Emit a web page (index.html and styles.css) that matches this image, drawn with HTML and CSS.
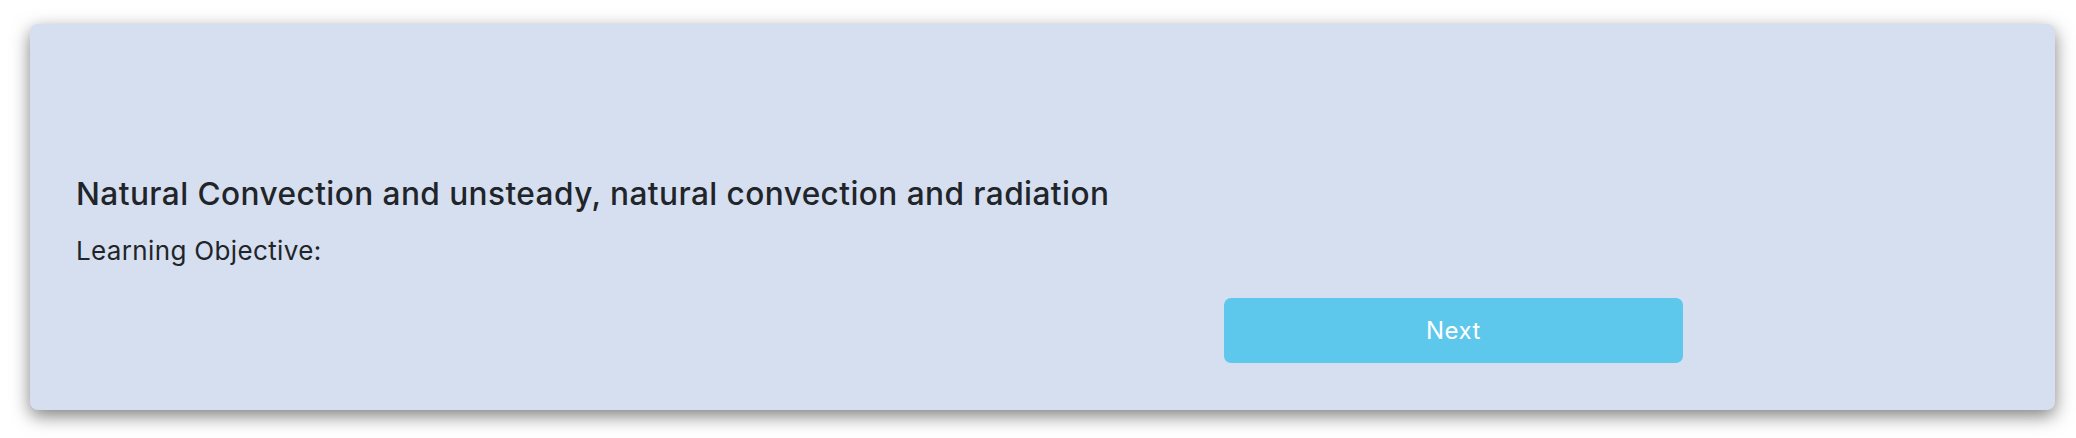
FILE: index.html
```html
<!DOCTYPE html>
<html lang="en">
<head>
<meta charset="utf-8">
<title>Natural Convection</title>
<link rel="stylesheet" href="styles.css">
</head>
<body>
<div class="page">
  <div class="card">
    <h4 class="card-title">Natural Convection and unsteady, natural convection and radiation</h4>
    <p class="card-text">Learning Objective:</p>
    <div class="actions">
      <button class="btn-next" type="button">Next</button>
    </div>
  </div>
</div>
</body>
</html>
```
FILE: styles.css
```css
html, body {
  margin: 0;
  padding: 0;
  background: #ffffff;
}
body {
  font-family: Inter, "Noto Sans", "Liberation Sans", sans-serif;
  color: #212529;
}
.page {
  padding: 24px 21px 28px 30px;
}
.card {
  background: #d6dff0;
  border-radius: 8px;
  box-shadow: 0 6px 18px rgba(0, 0, 0, 0.5);
  padding: 151px 46px 47px 46px;
  height: 386px;
  box-sizing: border-box;
}
.card-title {
  margin: 0 0 17.6px 0;
  font-size: 31.6px;
  font-weight: 500;
  line-height: 38.4px;
  letter-spacing: 0.43px;
}
.card-text {
  margin: 0 0 28px 0;
  font-size: 26px;
  font-weight: 400;
  line-height: 39px;
  letter-spacing: 0.35px;
}
.actions {
  display: flex;
  padding-left: 1148px;
}
.btn-next {
  width: 459px;
  height: 65px;
  border: none;
  border-radius: 7px;
  background: #5ec8ec;
  color: #ffffff;
  font-family: inherit;
  font-size: 24px;
  font-weight: 400;
  letter-spacing: 0.5px;
  cursor: pointer;
}
```
